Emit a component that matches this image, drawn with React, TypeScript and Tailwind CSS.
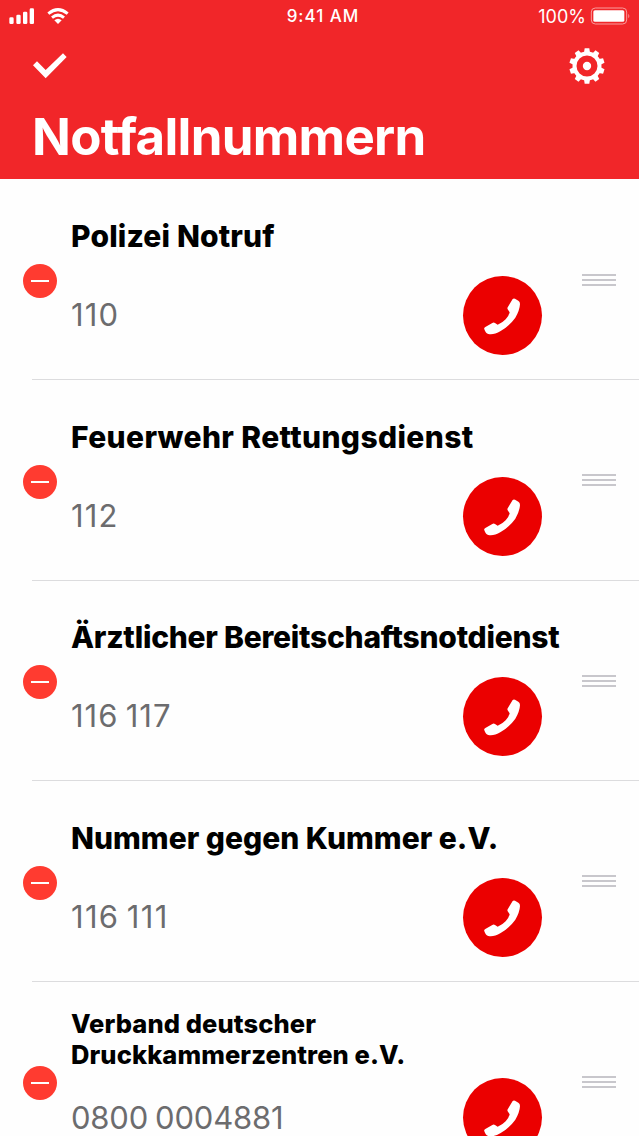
type Contact = {
  id: number;
  name: string;
  phone: string;
  nameClass: string;
  phoneClass: string;
};

const contacts: Contact[] = [
  { id: 1, name: 'Polizei Notruf', phone: '110', nameClass: 'text-[30px] tracking-[0.150px]', phoneClass: 'tracking-[1.200px]' },
  { id: 2, name: 'Feuerwehr Rettungsdienst', phone: '112', nameClass: 'text-[30px] tracking-[0.370px]', phoneClass: 'tracking-[1.200px]' },
  { id: 3, name: 'Ärztlicher Bereitschaftsnotdienst', phone: '116 117', nameClass: 'text-[30px] tracking-[-0.250px]', phoneClass: 'tracking-[1px] [word-spacing:-2.500px]' },
  { id: 4, name: 'Nummer gegen Kummer e.V.', phone: '116 111', nameClass: 'text-[30px]', phoneClass: 'tracking-[1.300px] [word-spacing:-2.500px]' },
  { id: 5, name: 'Verband deutscher Druckkammerzentren e.V.', phone: '0800 0004881', nameClass: 'text-[25.500px] leading-[31px] tracking-[0.100px]', phoneClass: 'tracking-[-0.200px] [word-spacing:-1.500px]' },
];

const toothAngles = [0, 36, 72, 108, 144, 180, 216, 252, 288, 324];

const SignalIcon = () => (
  <svg className="w-[26px] h-4" viewBox="0 0 78 48" fill="white">
    <rect x="1" y="28" width="13" height="20" rx="4" />
    <rect x="22" y="20" width="13" height="28" rx="4" />
    <rect x="42" y="11" width="13" height="37" rx="4" />
    <rect x="62" y="1" width="13" height="47" rx="4" />
  </svg>
);

const WifiIcon = () => (
  <svg className="w-[22px] h-4" viewBox="0 0 66 48" fill="none" stroke="white" strokeWidth="9">
    <path d="M4 17 Q33 -7 62 17" />
    <path d="M15 29 Q33 14 51 29" />
    <path d="M33 48 L22 37 Q33 28 44 37 Z" fill="white" stroke="none" />
  </svg>
);

const BatteryIcon = () => (
  <svg className="w-10 h-[18px]" viewBox="0 0 120 54" fill="none">
    <rect x="4" y="3" width="106" height="48" rx="12" stroke="#f99c9d" strokeWidth="3" />
    <rect x="10" y="9.500" width="93" height="35" rx="5" fill="white" />
    <path d="M115 20 Q121 27 115 34 Z" fill="#f99c9d" />
  </svg>
);

const CheckIcon = () => (
  <svg className="w-[34px] h-[26px]" viewBox="0 0 102 78">
    <path d="M0 37 L12 25 L38 51 L90 1 L101 12 L38 76 Z" fill="white" />
  </svg>
);

const GearIcon = () => (
  <svg className="w-9 h-9" viewBox="-54 -54 108 108" fill="white">
    <circle r="37.500" fill="none" stroke="white" strokeWidth="12" />
    <circle r="12.500" />
    {toothAngles.map(angle => (
      <path key={angle} d="M-9 -40 L-7 -53 L7 -53 L9 -40 Z" transform={`rotate(${angle})`} />
    ))}
  </svg>
);

const PhoneIcon = () => (
  <svg className="w-full h-full" viewBox="0 0 237 237" fill="white">
    <path d="M149 69 Q152 66 156 68 L166 74 Q171 77 171 84 Q170 103 157 125 Q140 149 113 165 Q91 178 76 174 Q68 172 64 160 Q62 156 67 153 L88 141 Q92 138 96 141 L104 146 Q118 141 128 130 Q138 119 140 109 L134 100 Q132 96 135 92 Z" />
  </svg>
);

const ContactRow = ({ contact }: { contact: Contact }) => (
  <li className="flex h-[200.600px] shrink-0 pl-[23px]">
    <button className="mt-[84.500px] flex h-[34px] w-[34px] shrink-0 items-center justify-center rounded-full bg-[#ff3b30]">
      <span className="h-0.5 w-[18px] bg-white" />
    </button>
    <div className="ml-[-25px] flex flex-1 border-b border-[#dcdcde] pl-[39px]">
      <div className="flex w-[391.700px] shrink-0 flex-col">
        <h2 className={`mr-[-120px] flex items-end font-extrabold text-black ${contact.id === 5 ? 'h-[88px] w-[360px]' : 'h-[79.500px] whitespace-nowrap'} ${contact.nameClass}`}>
          {contact.name}
        </h2>
        <p className={`${contact.id === 5 ? 'mt-[26px]' : 'mt-[34px]'} text-[31px] leading-[44px] text-[#6c6c6e] ${contact.phoneClass}`}>
          {contact.phone}
        </p>
      </div>
      <button className="mt-[96.500px] h-[79px] w-[79px] shrink-0 rounded-full bg-[#eb0000]">
        <PhoneIcon />
      </button>
      <div className="ml-10 mt-[94px] flex h-3 w-[34px] flex-col justify-between">
        <span className="h-0.5 bg-[#c8c7cc]" />
        <span className="h-0.5 bg-[#c8c7cc]" />
        <span className="h-0.5 bg-[#c8c7cc]" />
      </div>
    </div>
  </li>
);

const App = () => {
  return (
    <div className="h-[1136px] w-[639px] overflow-hidden bg-[#fefefe] font-['Inter',sans-serif]">
      <header className="flex h-[179px] flex-col bg-[#f12629] text-white">
        <div className="grid h-8 grid-cols-3 items-center pl-[9px] pr-[9px]">
          <div className="flex items-center gap-3">
            <SignalIcon />
            <WifiIcon />
          </div>
          <span className="pt-0.5 pl-[7px] text-center text-[17px] font-medium tracking-[1px]">9:41 AM</span>
          <div className="flex items-center justify-end gap-1">
            <span className="pt-px text-[18px]">100%</span>
            <BatteryIcon />
          </div>
        </div>
        <div className="flex h-[68px] items-center justify-between pl-[33px] pr-[34px]">
          <CheckIcon />
          <GearIcon />
        </div>
        <h1 className="pl-8 pt-px text-[51px] font-bold leading-[72px] tracking-[-0.720px]">Notfallnummern</h1>
      </header>
      <ul className="flex flex-col pt-[0.500px]">
        {contacts.map(contact => (
          <ContactRow key={contact.id} contact={contact} />
        ))}
      </ul>
    </div>
  );
};

export default App;
